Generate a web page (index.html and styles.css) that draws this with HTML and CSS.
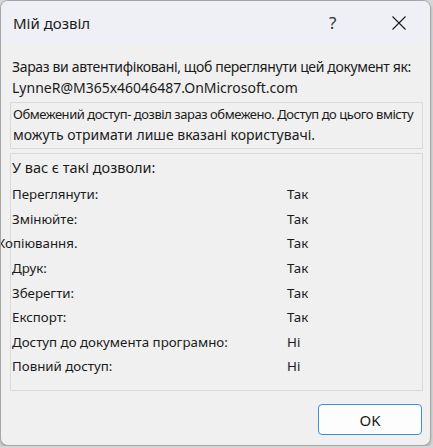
FILE: index.html
```html
<!DOCTYPE html>
<html lang="uk">
	<head>
		<meta charset="UTF-8" />
		<meta name="viewport" content="width=device-width, initial-scale=1.0" />
		<title>Мій дозвіл</title>
		<link rel="stylesheet" href="styles.css">
	</head>
	<body>
		<div class="dialog">
			<div class="titlebar">
				<span class="title">Мій дозвіл</span>
				<span class="help">?</span>
				<svg class="close" width="16" height="16" viewBox="0 0 16 16">
					<path d="M1.5 1.5 L14.5 14.5 M14.5 1.5 L1.5 14.5" stroke="#1a1a1a" stroke-width="1.1" fill="none" />
				</svg>
			</div>

			<div class="content">
				<p class="auth">Зараз ви автентифіковані, щоб переглянути цей документ як:</p>
				<p class="user">LynneR@M365x46046487.OnMicrosoft.com</p>

				<div class="box notice">
					<p class="notice-small">Обмежений доступ- дозвіл зараз обмежено. Доступ до цього вмісту</p>
					<p class="notice-big">можуть отримати лише вказані користувачі.</p>
				</div>

				<div class="box rights">
					<p class="rights-head">У вас є такі дозволи:</p>
					<div class="row"><span class="name">Переглянути:</span><span class="val">Так</span></div>
					<div class="row"><span class="name">Змінюйте:</span><span class="val">Так</span></div>
					<div class="row"><span class="name shifted">Копіювання.</span><span class="val">Так</span></div>
					<div class="row"><span class="name">Друк:</span><span class="val">Так</span></div>
					<div class="row"><span class="name">Зберегти:</span><span class="val">Так</span></div>
					<div class="row"><span class="name">Експорт:</span><span class="val">Так</span></div>
					<div class="row"><span class="name">Доступ до документа програмно:</span><span class="val">Ні</span></div>
					<div class="row"><span class="name">Повний доступ:</span><span class="val">Ні</span></div>
				</div>

				<div class="actions">
					<button type="button">OK</button>
				</div>
			</div>
		</div>
	</body>
</html>
```

FILE: styles.css
```css
body {
	font-family: "Noto Sans", "Open Sans", sans-serif;
	background-color: #d6d6d6;
	margin: 0;
	padding: 0;
	color: #1b1b1b;
}

p {
	margin: 0;
	white-space: nowrap;
}

.dialog {
	width: 429px;
	height: 444px;
	background-color: #f0f0f0;
	border: 1px solid #a6a6a6;
	border-radius: 8px;
	overflow: hidden;
	box-shadow: 0 2px 3px rgba(0, 0, 0, 0.2);
}

.titlebar {
	height: 43px;
	background-color: #eef0f6;
	display: flex;
	align-items: center;
	padding-left: 12px;
}

.title {
	font-size: 15px;
	flex: 1;
}

.help {
	font-size: 17px;
	color: #333;
	width: 20px;
	margin-right: 42px;
}

.close {
	margin-right: 23px;
}

.content {
	padding: 12px 7px 0 9px;
}

.auth {
	font-size: 14px;
	letter-spacing: -0.35px;
	padding-left: 2px;
	line-height: 21px;
}

.user {
	font-size: 14px;
	padding-left: 2px;
	line-height: 21px;
	margin-bottom: 4px;
}

.box {
	border: 1px solid #dadada;
	background-color: #f0f0f0;
}

.notice {
	padding: 1px 2px 2px;
	margin-bottom: 4px;
	overflow: hidden;
}

.notice-small {
	font-size: 13px;
	letter-spacing: -0.45px;
	line-height: 20px;
}

.notice-big {
	font-size: 14px;
	line-height: 22px;
}

.rights {
	height: 238px;
	padding: 1px 1px 0;
	box-sizing: border-box;
}

.rights-head {
	font-size: 14.5px;
	line-height: 24px;
	margin-bottom: 3px;
}

.row {
	display: flex;
	font-size: 13.3px;
	height: 24.6px;
	align-items: center;
}

.name {
	width: 275px;
	white-space: nowrap;
}

.shifted {
	margin-left: -15px;
	width: 290px;
}

.actions {
	display: flex;
	justify-content: flex-end;
	padding-top: 13px;
	padding-right: 1px;
}

button {
	width: 104px;
	height: 31px;
	background-color: #fdfdfd;
	border: 1px solid #3f8fdc;
	border-radius: 4px;
	font-family: inherit;
	font-size: 15px;
	color: #1b1b1b;
}
```
